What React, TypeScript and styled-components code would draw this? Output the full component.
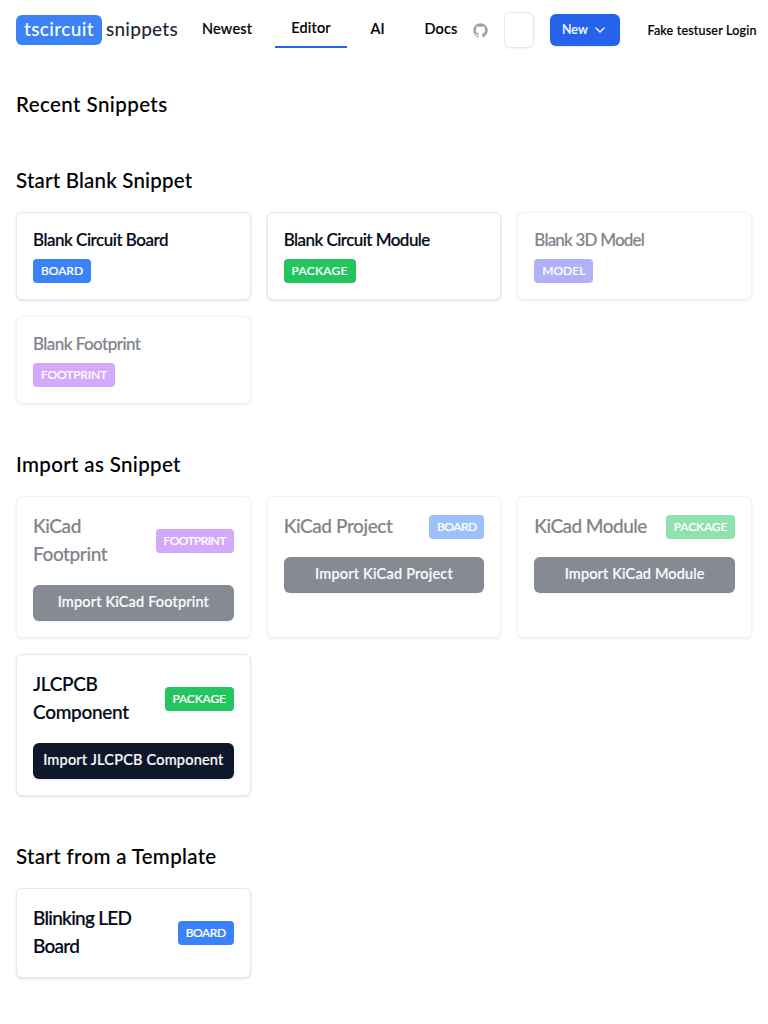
import React from "react";
import styled, { createGlobalStyle } from "styled-components";
import { ChevronDown } from "lucide-react";

const GlobalStyle = createGlobalStyle`
  *, *::before, *::after { box-sizing: border-box; }
  body {
    margin: 0;
    background: #fff;
    color: #000;
    font-family: Lato, "Open Sans", sans-serif;
    font-weight: 500;
  }
  h2, h3 { margin: 0; padding: 0; font-weight: 500; }
  button { font-family: inherit; font-weight: 500; }
  a { color: inherit; text-decoration: none; }
`;

const Label = styled.span<{ $track?: number; $stroke?: number }>`
  letter-spacing: ${(p) => p.$track ?? 0}px;
  -webkit-text-stroke: ${(p) => p.$stroke ?? 0.2}px currentColor;
`;

const Header = styled.header`
  display: flex;
  align-items: center;
  height: 60px;
  padding-left: 16px;
  white-space: nowrap;
`;

const Logo = styled.a`
  display: flex;
  align-items: flex-start;
  gap: 4px;
  width: 162px;
  font-size: 19px;
  line-height: 28px;
  color: #1f2937;
`;

const LogoMark = styled.span`
  width: 86px;
  height: 30px;
  border-radius: 6px;
  background: #3b82f6;
  color: #fff;
  text-align: center;
`;

const Nav = styled.nav`
  display: flex;
  align-items: center;
  margin-left: 24px;
  font-size: 14.5px;
  line-height: 34px;
`;

const NavLink = styled.a<{ $width: number; $gap?: number; $active?: boolean }>`
  width: ${(p) => p.$width}px;
  height: 36px;
  margin-right: ${(p) => p.$gap ?? 0}px;
  line-height: ${(p) => (p.$active ? 32 : 34)}px;
  text-align: center;
  border-bottom: ${(p) => (p.$active ? "2px solid #2563eb" : "0")};
`;

const GithubLink = styled.a`
  display: flex;
  margin: 1px 16px 0 15px;
  color: #9ca3af;
`;

const SearchBox = styled.button`
  width: 30px;
  height: 36px;
  border: 1px solid #e2e8f0;
  border-radius: 6px;
  background: #fff;
  box-shadow: 0 1px 2px rgba(0, 0, 0, 0.05);
`;

const NewButton = styled.button`
  display: flex;
  align-items: center;
  justify-content: space-between;
  width: 70px;
  height: 32px;
  margin-left: 16px;
  padding: 0 12px;
  border: 0;
  border-radius: 6px;
  background: #2563eb;
  color: #f8fafc;
  font-size: 12.5px;
  line-height: 16px;
  box-shadow: 0 1px 2px rgba(0, 0, 0, 0.1);
`;

const Login = styled.a`
  margin-left: 27.5px;
  font-size: 12.5px;
`;

const Main = styled.main`
  display: flex;
  flex-direction: column;
  gap: 48px;
  padding: 32px 16px;
`;

const Heading = styled.h2`
  height: 28px;
  font-size: 20.5px;
  line-height: 24px;
`;

const Grid = styled.div`
  display: grid;
  grid-template-columns: repeat(3, minmax(0, 1fr));
  gap: 16px;
  margin-top: 16px;
`;

const Card = styled.article<{ $disabled?: boolean }>`
  padding: 16px;
  border: 1px solid #e2e8f0;
  border-radius: 6px;
  background: #fff;
  color: #020817;
  box-shadow: 0 1px 3px rgba(0, 0, 0, 0.1), 0 1px 2px -1px rgba(0, 0, 0, 0.1);
  opacity: ${(p) => (p.$disabled ? 0.5 : 1)};
`;

const BlankTitle = styled.h3`
  height: 24px;
  margin-bottom: 6px;
  font-size: 17px;
  line-height: 22px;
`;

const CardHead = styled.div`
  display: flex;
  align-items: center;
  justify-content: space-between;
`;

const CardTitle = styled.h3`
  max-width: 118px;
  margin: -1px 0 1px;
  font-size: 19px;
  line-height: 28px;
`;

const Badge = styled.span<{ $color: string; $width: number }>`
  display: flex;
  align-items: center;
  justify-content: center;
  flex-shrink: 0;
  width: ${(p) => p.$width}px;
  height: 24px;
  border-radius: 4px;
  background: ${(p) => p.$color};
  color: #fff;
  font-size: 12px;
  line-height: 16px;
`;

const ImportButton = styled.button`
  width: 100%;
  height: 36px;
  margin-top: 16px;
  padding: 0 0 3px;
  border: 0;
  border-radius: 6px;
  background: #0f172a;
  color: #f8fafc;
  font-size: 14.5px;
  white-space: nowrap;
  box-shadow: 0 1px 2px rgba(0, 0, 0, 0.1);
`;

const colors = {
  BOARD: "#3b82f6",
  PACKAGE: "#22c55e",
  MODEL: "#6366f1",
  FOOTPRINT: "#a855f7",
};
type Kind = keyof typeof colors;

interface BlankItem {
  title: string;
  track: number;
  kind: Kind;
  width: number;
  badgeTrack: number;
  disabled?: boolean;
}

const blanks: BlankItem[] = [
  { title: "Blank Circuit Board", track: -0.48, kind: "BOARD", width: 58, badgeTrack: 0 },
  { title: "Blank Circuit Module", track: -0.54, kind: "PACKAGE", width: 72, badgeTrack: 0.27 },
  { title: "Blank 3D Model", track: -0.8, kind: "MODEL", width: 59, badgeTrack: 0, disabled: true },
  { title: "Blank Footprint", track: -0.55, kind: "FOOTPRINT", width: 82, badgeTrack: -0.13, disabled: true },
];

interface ImportItem extends BlankItem {
  buttonTrack: number;
}

const imports: ImportItem[] = [
  { title: "KiCad Footprint", track: -0.41, kind: "FOOTPRINT", width: 78, badgeTrack: -0.55, buttonTrack: 0.16, disabled: true },
  { title: "KiCad Project", track: -0.41, kind: "BOARD", width: 55, badgeTrack: -0.5, buttonTrack: 0.21, disabled: true },
  { title: "KiCad Module", track: -0.54, kind: "PACKAGE", width: 69, badgeTrack: -0.12, buttonTrack: 0.14, disabled: true },
  { title: "JLCPCB Component", track: -0.3, kind: "PACKAGE", width: 69, badgeTrack: -0.12, buttonTrack: 0.2 },
];

function GithubMark() {
  return (
    <svg width="15" height="15" viewBox="0 0 15 15" fill="currentColor">
      <path
        fillRule="evenodd"
        clipRule="evenodd"
        d="M7.49933 0.25C3.49635 0.25 0.25 3.49593 0.25 7.50024C0.25 10.703 2.32715 13.4206 5.2081 14.3797C5.57084 14.446 5.70302 14.2222 5.70302 14.0299C5.70302 13.8576 5.69679 13.4019 5.69323 12.797C3.67661 13.235 3.25112 11.825 3.25112 11.825C2.92132 10.9874 2.44599 10.7644 2.44599 10.7644C1.78773 10.3149 2.49584 10.3238 2.49584 10.3238C3.22353 10.375 3.60629 11.0711 3.60629 11.0711C4.25298 12.1788 5.30335 11.8588 5.71638 11.6732C5.78225 11.205 5.96962 10.8854 6.17658 10.7043C4.56675 10.5209 2.87415 9.89918 2.87415 7.12104C2.87415 6.32925 3.15677 5.68257 3.62053 5.17563C3.54576 4.99226 3.29697 4.25521 3.69174 3.25691C3.69174 3.25691 4.30015 3.06196 5.68522 3.99973C6.26337 3.83906 6.8838 3.75895 7.50022 3.75583C8.1162 3.75895 8.73619 3.83906 9.31523 3.99973C10.6994 3.06196 11.3069 3.25691 11.3069 3.25691C11.7026 4.25521 11.4538 4.99226 11.3795 5.17563C11.8441 5.68257 12.1245 6.32925 12.1245 7.12104C12.1245 9.9063 10.4292 10.5192 8.81452 10.6985C9.07444 10.9224 9.30633 11.3648 9.30633 12.0413C9.30633 13.0102 9.29742 13.7922 9.29742 14.0299C9.29742 14.2239 9.42828 14.4496 9.79591 14.3788C12.6746 13.4179 14.75 10.7025 14.75 7.50024C14.75 3.49593 11.5036 0.25 7.49933 0.25Z"
      />
    </svg>
  );
}

function Section({ title, track, children }: { title: string; track: number; children?: React.ReactNode }) {
  return (
    <section>
      <Heading><Label $track={track} $stroke={0.1}>{title}</Label></Heading>
      {children && <Grid>{children}</Grid>}
    </section>
  );
}

export default function App() {
  return (
    <>
      <GlobalStyle />
      <Header>
        <Logo href="#">
          <LogoMark><Label $track={0.37} $stroke={0}>tscircuit</Label></LogoMark>
          <Label $track={0.25} $stroke={0}>snippets</Label>
        </Logo>
        <Nav>
          <NavLink href="#" $width={50} $gap={23}><Label $track={0.2}>Newest</Label></NavLink>
          <NavLink href="#" $width={72} $gap={23} $active><Label $track={0.2}>Editor</Label></NavLink>
          <NavLink href="#" $width={15} $gap={39}><Label>AI</Label></NavLink>
          <NavLink href="#" $width={34}><Label $track={0.2}>Docs</Label></NavLink>
        </Nav>
        <GithubLink href="#" aria-label="GitHub"><GithubMark /></GithubLink>
        <SearchBox aria-label="Search" />
        <NewButton>
          <Label>New</Label>
          <ChevronDown size={16} />
        </NewButton>
        <Login href="#"><Label $track={0.19}>Fake testuser Login</Label></Login>
      </Header>
      <Main>
        <Section title="Recent Snippets" track={0.43} />
        <Section title="Start Blank Snippet" track={0.2}>
          {blanks.map((b) => (
            <Card key={b.title} $disabled={b.disabled}>
              <BlankTitle><Label $track={b.track}>{b.title}</Label></BlankTitle>
              <Badge $color={colors[b.kind]} $width={b.width}><Label $track={b.badgeTrack}>{b.kind}</Label></Badge>
            </Card>
          ))}
        </Section>
        <Section title="Import as Snippet" track={0.35}>
          {imports.map((c) => (
            <Card key={c.title} $disabled={c.disabled}>
              <CardHead>
                <CardTitle><Label $track={c.track}>{c.title}</Label></CardTitle>
                <Badge $color={colors[c.kind]} $width={c.width}><Label $track={c.badgeTrack}>{c.kind}</Label></Badge>
              </CardHead>
              <ImportButton><Label $track={c.buttonTrack}>Import {c.title}</Label></ImportButton>
            </Card>
          ))}
        </Section>
        <Section title="Start from a Template" track={0.33}>
          <Card>
            <CardHead>
              <CardTitle><Label $track={-0.72}>Blinking LED Board</Label></CardTitle>
              <Badge $color={colors.BOARD} $width={56}><Label $track={-0.4}>BOARD</Label></Badge>
            </CardHead>
          </Card>
        </Section>
      </Main>
    </>
  );
}
